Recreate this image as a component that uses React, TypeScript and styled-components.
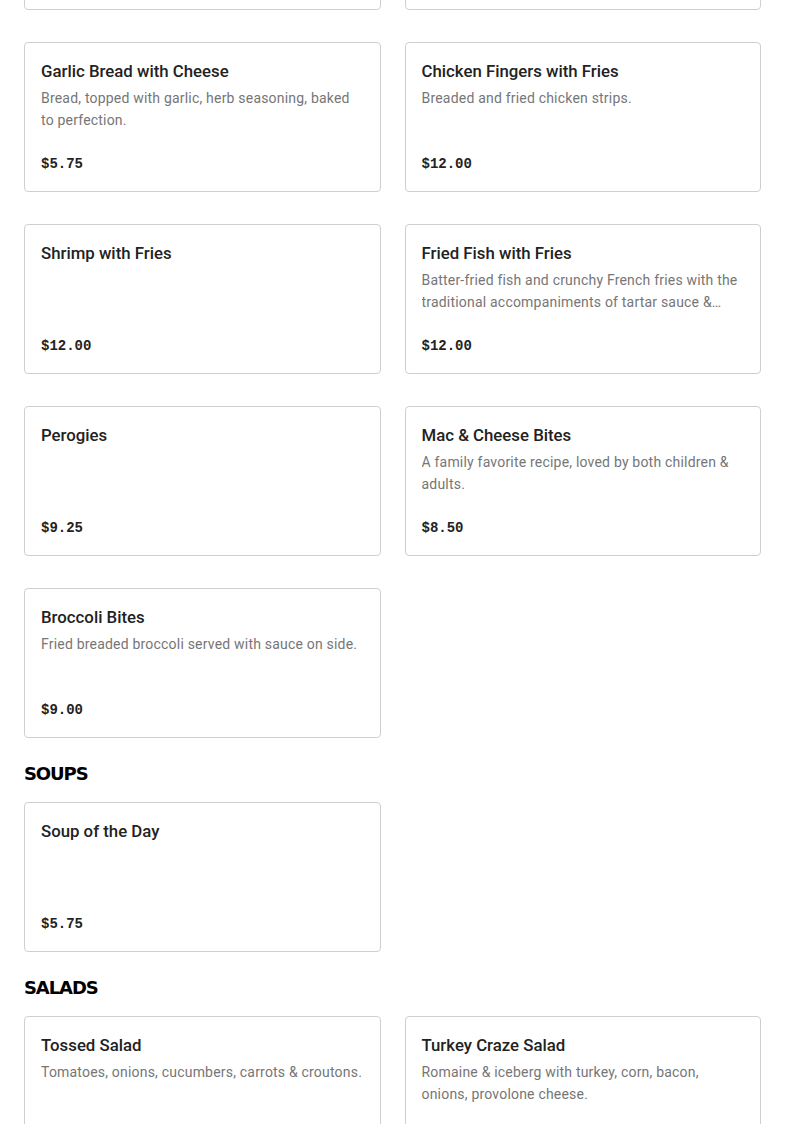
import * as React from 'react'
import styled, { createGlobalStyle } from 'styled-components'

type Item = { name: string; description?: string; price: string }

const appetizers: Item[] = [
  { name: 'Mozzarella Sticks', description: 'Breaded mozzarella, served with marinara.', price: '$8.50' },
  { name: 'Onion Rings', description: 'Crispy battered onion rings.', price: '$7.00' },
  {
    name: 'Garlic Bread with Cheese',
    description: 'Bread, topped with garlic, herb seasoning, baked to perfection.',
    price: '$5.75',
  },
  { name: 'Chicken Fingers with Fries', description: 'Breaded and fried chicken strips.', price: '$12.00' },
  { name: 'Shrimp with Fries', price: '$12.00' },
  {
    name: 'Fried Fish with Fries',
    description:
      'Batter-fried fish and crunchy French fries with the traditional accompaniments of tartar sauce & lemon wedges.',
    price: '$12.00',
  },
  { name: 'Perogies', price: '$9.25' },
  {
    name: 'Mac & Cheese Bites',
    description: 'A family favorite recipe, loved by both children & adults.',
    price: '$8.50',
  },
  { name: 'Broccoli Bites', description: 'Fried breaded broccoli served with sauce on side.', price: '$9.00' },
]

const soups: Item[] = [{ name: 'Soup of the Day', price: '$5.75' }]

const salads: Item[] = [
  { name: 'Tossed Salad', description: 'Tomatoes, onions, cucumbers, carrots & croutons.', price: '$7.50' },
  {
    name: 'Turkey Craze Salad',
    description: 'Romaine & iceberg with turkey, corn, bacon, onions, provolone cheese.',
    price: '$13.50',
  },
]

const MenuGrid = ({ items }: { items: Item[] }) => (
  <Grid>
    {items.map((item) => (
      <Card key={item.name}>
        <Name>{item.name}</Name>
        {item.description && <Description>{item.description}</Description>}
        <Price>{item.price}</Price>
      </Card>
    ))}
  </Grid>
)

export default () => {
  return (
    <>
      <GlobalStyle />
      <Page>
        <MenuGrid items={appetizers} />
        <Section>
          <Heading>{'SOUPS'}</Heading>
          <MenuGrid items={soups} />
        </Section>
        <Section>
          <Heading>{'SALADS'}</Heading>
          <MenuGrid items={salads} />
        </Section>
      </Page>
    </>
  )
}

const GlobalStyle = createGlobalStyle`
  html, body {
    margin: 0;
    padding: 0;
    background: #fff;
    overflow: hidden;
  }
  body {
    font-family: 'Roboto', 'Liberation Sans', sans-serif;
  }
`

// page is shown scrolled, the first row of cards sits above the fold
const Page = styled.main`
  margin-top: -140px;
  padding: 0 24px 40px;
`

const Section = styled.section`
  margin-top: 24px;
`

const Heading = styled.h2`
  margin: 0 0 16px;
  font-family: 'DejaVu Sans', sans-serif;
  font-size: 18px;
  font-weight: 900;
  line-height: 24px;
  letter-spacing: -1.1px;
  color: #000;
`

const Grid = styled.div`
  display: grid;
  grid-template-columns: 1fr 1fr;
  column-gap: 24px;
  row-gap: 32px;
`

const Card = styled.div`
  display: flex;
  flex-direction: column;
  height: 150px;
  box-sizing: border-box;
  padding: 16px;
  border: 1px solid #cfcfcf;
  border-radius: 4px;
  background: #fff;
`

const Name = styled.div`
  font-size: 16.8px;
  font-weight: 500;
  line-height: 24px;
  color: #222;
  margin-bottom: 4px;
`

const Description = styled.div`
  font-size: 14px;
  line-height: 22px;
  letter-spacing: 0.2px;
  color: #767676;
  display: -webkit-box;
  -webkit-line-clamp: 2;
  -webkit-box-orient: vertical;
  overflow: hidden;
`

const Price = styled.div`
  margin-top: auto;
  font-family: 'Liberation Mono', monospace;
  font-size: 14px;
  font-weight: 700;
  line-height: 22px;
  color: #222;
`
